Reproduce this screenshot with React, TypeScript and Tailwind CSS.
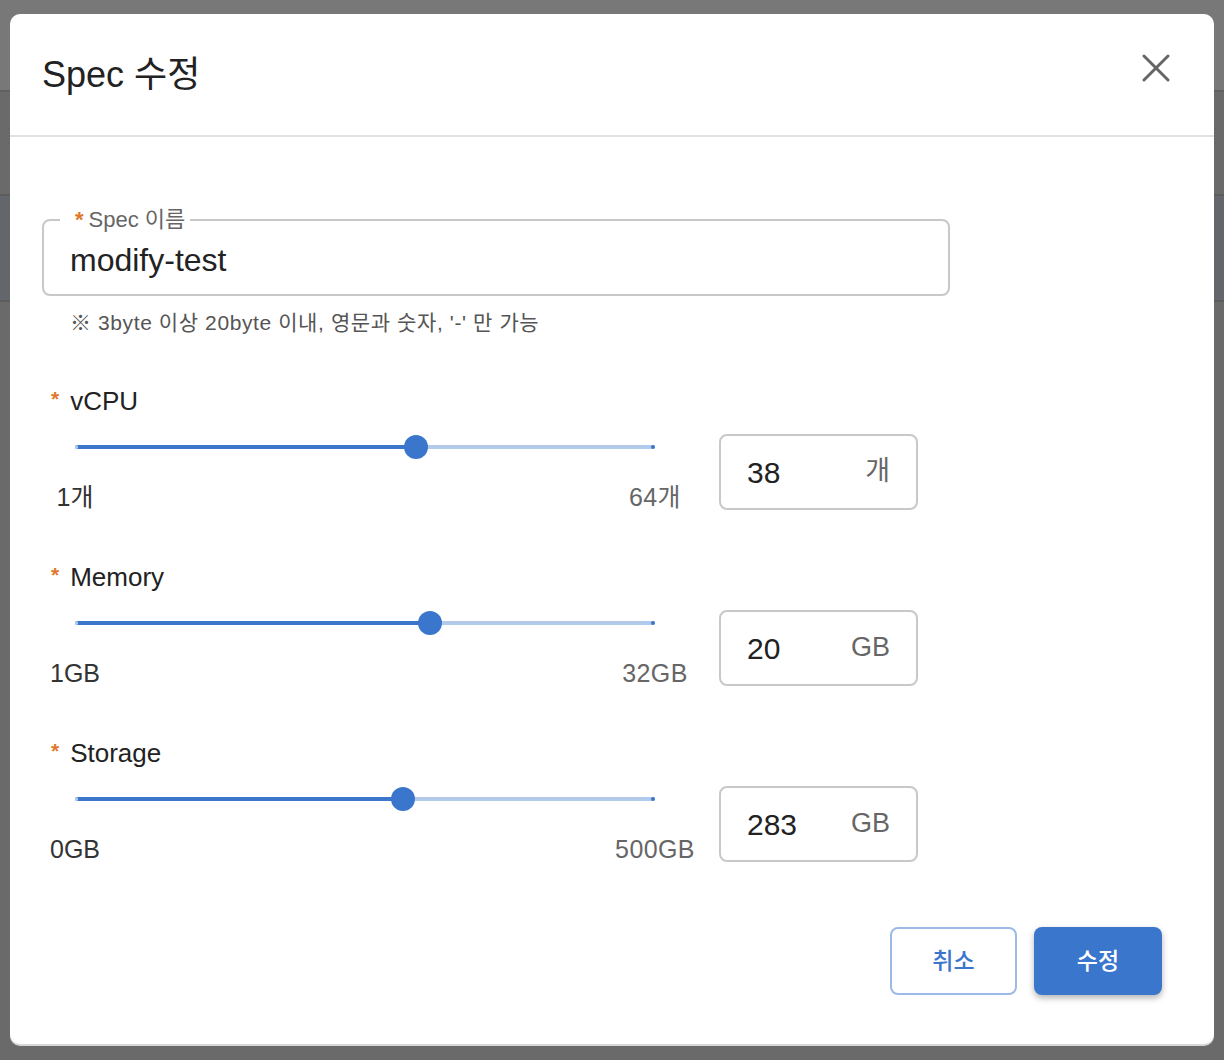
import React from 'react'

const FONT = { fontFamily: '"Liberation Sans", "Noto Sans CJK KR", sans-serif' }

type SpecSlider = {
  label: string
  min: number
  max: number
  value: number
  unit: string
  minLabel: string
  maxLabel: string
}

const sliders: SpecSlider[] = [
  { label: 'vCPU', min: 1, max: 64, value: 38, unit: '개', minLabel: '1개', maxLabel: '64개' },
  { label: 'Memory', min: 1, max: 32, value: 20, unit: 'GB', minLabel: '1GB', maxLabel: '32GB' },
  { label: 'Storage', min: 0, max: 500, value: 283, unit: 'GB', minLabel: '0GB', maxLabel: '500GB' },
]

const Asterisk = ({ className = '' }: { className?: string }) => (
  <span className={`text-[#e0782c] font-bold ${className}`}>*</span>
)

const SliderField = ({ label, min, max, value, unit, minLabel, maxLabel }: SpecSlider) => {
  const pct = ((value - min) / (max - min)) * 100

  return (
    <div className="flex flex-col">
      <div className="flex h-[30px] items-center pl-[9px]">
        <Asterisk className="mr-[11px] -mt-[6px] text-[21px] leading-none" />
        <span className="text-[26px] text-[#222]">{label}</span>
      </div>
      <div className="mt-[18px] flex">
        <div className="relative ml-[33px] h-[76px] w-[580px]">
          {/* track */}
          <div className="absolute left-0 right-0 top-[11px] h-[4px] rounded-full bg-[#b3cbea]" />
          <div
            className="absolute left-0 top-[11px] h-[4px] rounded-full bg-[#3a76cc]"
            style={{ width: `${pct}%` }}
          />
          <div className="absolute left-0 top-[11px] h-[4px] w-[3px] rounded-full bg-[#b3cbea]" />
          <div className="absolute right-0 top-[11px] h-[4px] w-[4px] rounded-full bg-[#3a76cc]" />
          <div
            className="absolute top-[1px] h-[24px] w-[24px] -translate-x-1/2 rounded-full bg-[#3a76cc]"
            style={{ left: `${pct}%` }}
          />
          {/* marks */}
          <span className="absolute left-0 top-[48px] -translate-x-1/2 text-[25px] leading-[30px] text-[#333]">
            {minLabel}
          </span>
          <span className="absolute right-0 top-[48px] translate-x-1/2 text-[25px] leading-[30px] tracking-[0.4px] text-[#666]">
            {maxLabel}
          </span>
        </div>
        <div className="ml-[64px] flex h-[76px] w-[199px] items-center justify-between rounded-[8px] border-2 border-[#c8c8c8] pl-[26px] pr-[26px]">
          <span className="text-[30px] text-[#222]">{value}</span>
          <span className="text-[27px] text-[#666] -mt-[2px]">{unit}</span>
        </div>
      </div>
    </div>
  )
}

const App = () => {
  return (
    <div className="relative h-[1060px] w-[1224px] overflow-hidden bg-[#6a6a6a]" style={FONT}>
      {/* page behind the overlay */}
      <div className="h-[92px] border-b-2 border-[#606060] bg-[#787878]" />
      <div className="h-[102px]" />
      <div className="h-[108px] border-y-2 border-[#5c5c5c] bg-[#63666b]" />

      <div className="absolute left-[10px] top-[14px] flex h-[1030px] w-[1204px] flex-col rounded-[10px] bg-white shadow-[0_2px_0_#d8d8d8]">
        <div className="flex h-[123px] items-center justify-between border-b-2 border-[#e2e2e2] pl-[32px] pr-[44px]">
          <h2 className="text-[36px] text-[#222]">Spec 수정</h2>
          <svg width="28" height="28" viewBox="0 0 28 28" className="mb-[14px]">
            <path d="M2 2 L26 26 M26 2 L2 26" stroke="#666" strokeWidth="3" strokeLinecap="round" />
          </svg>
        </div>

        <div className="flex flex-1 flex-col pl-[32px] pr-[52px] pt-[71px]">
          <fieldset className="w-[908px] rounded-[8px] border-2 border-[#c8c8c8] pl-[16px] pr-[16px] pb-[6px]">
            <legend className="pl-[15px] pr-[5px] text-[22px] leading-[24px] text-[#666]">
              <Asterisk className="mr-[5px] text-[22px]" />
              Spec 이름
            </legend>
            <input
              readOnly
              value="modify-test"
              className="h-[56px] w-full pl-[10px] text-[32px] text-[#222] outline-none"
            />
          </fieldset>
          <p className="mt-[15px] pl-[28px] text-[21px] leading-[24px] tracking-[0.6px] text-[#555]">
            ※ 3byte 이상 20byte 이내, 영문과 숫자, '-' 만 가능
          </p>

          <div className="mt-[51px] flex flex-col gap-[52px]">
            {sliders.map((s) => (
              <SliderField key={s.label} {...s} />
            ))}
          </div>

          <div className="mt-[65px] flex justify-end gap-[17px]">
            <button className="h-[68px] w-[127px] rounded-[8px] border-2 border-[#9cbae6] text-[23px] font-medium text-[#3a76cc]">
              취소
            </button>
            <button className="h-[68px] w-[128px] rounded-[8px] bg-[#3a76cc] text-[23px] font-medium text-white shadow-[0_3px_6px_rgba(0,0,0,0.3)]">
              수정
            </button>
          </div>
        </div>
      </div>
    </div>
  )
}

export default App
